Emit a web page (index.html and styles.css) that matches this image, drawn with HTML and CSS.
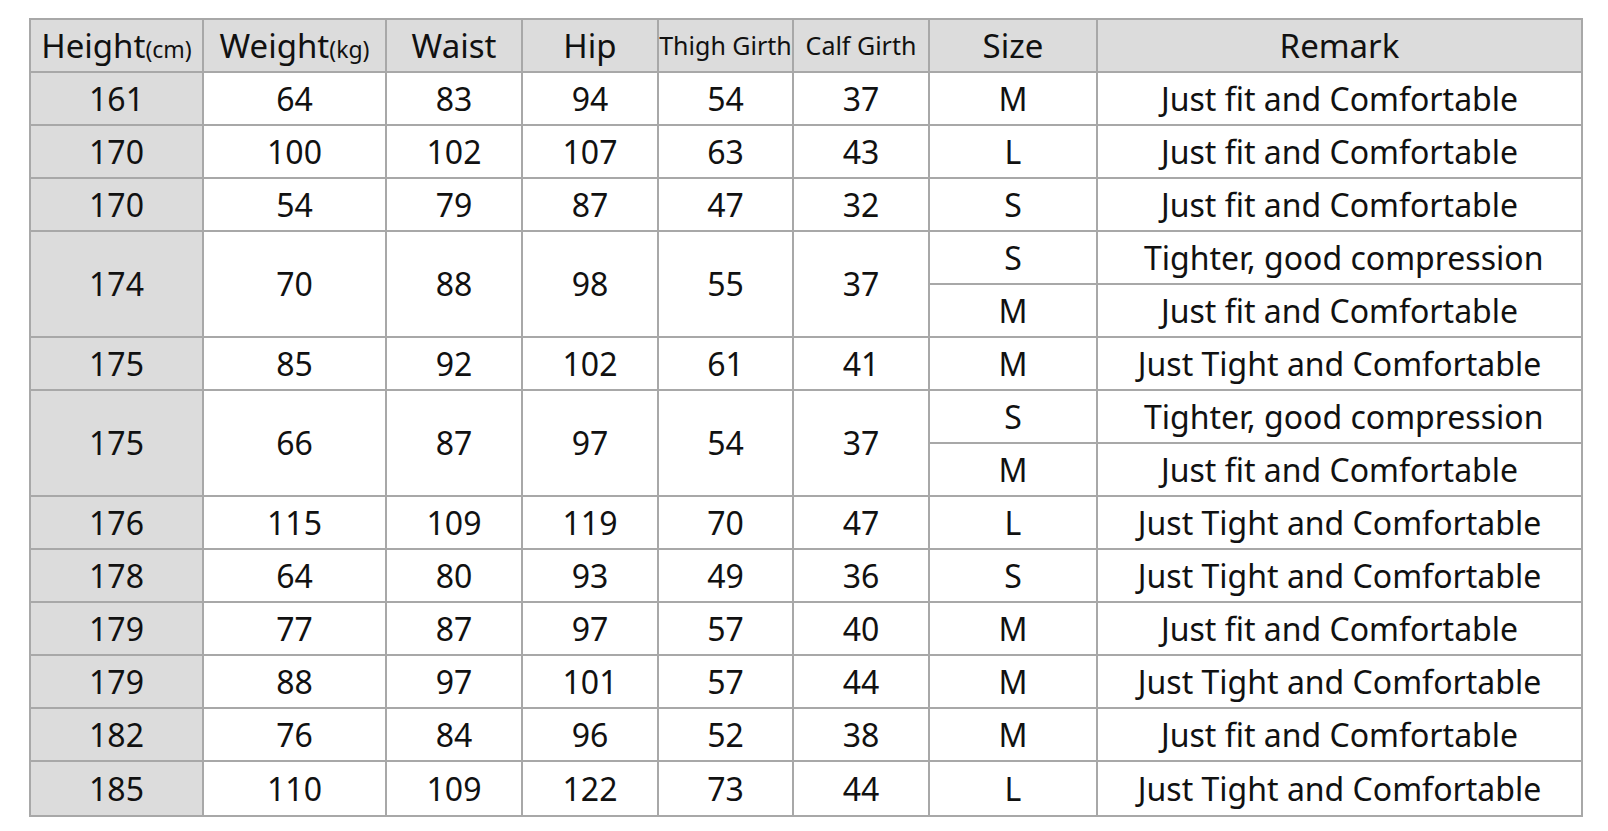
FILE: index.html
```html
<!DOCTYPE html>
<html>
<head>
<meta charset="utf-8">
<link rel="stylesheet" href="styles.css">
</head>
<body>
<div class="wrap">
<table class="size-table">
<colgroup>
<col class="c-height"><col class="c-weight"><col class="c-waist"><col class="c-hip"><col class="c-thigh"><col class="c-calf"><col class="c-size"><col class="c-remark">
</colgroup>
<thead>
<tr>
<th>Height<span class="unit">(cm)</span></th>
<th>Weight<span class="unit">(kg)</span></th>
<th>Waist</th>
<th>Hip</th>
<th class="small">Thigh Girth</th>
<th class="small">Calf Girth</th>
<th>Size</th>
<th>Remark</th>
</tr>
</thead>
<tbody>
<tr><td class="first">161</td><td>64</td><td>83</td><td>94</td><td>54</td><td>37</td><td>M</td><td>Just fit and Comfortable</td></tr>
<tr><td class="first">170</td><td>100</td><td>102</td><td>107</td><td>63</td><td>43</td><td>L</td><td>Just fit and Comfortable</td></tr>
<tr><td class="first">170</td><td>54</td><td>79</td><td>87</td><td>47</td><td>32</td><td>S</td><td>Just fit and Comfortable</td></tr>
<tr><td class="first" rowspan="2">174</td><td rowspan="2">70</td><td rowspan="2">88</td><td rowspan="2">98</td><td rowspan="2">55</td><td rowspan="2">37</td><td>S</td><td>&nbsp;Tighter, good compression</td></tr>
<tr><td>M</td><td>Just fit and Comfortable</td></tr>
<tr><td class="first">175</td><td>85</td><td>92</td><td>102</td><td>61</td><td>41</td><td>M</td><td>Just Tight and Comfortable</td></tr>
<tr><td class="first" rowspan="2">175</td><td rowspan="2">66</td><td rowspan="2">87</td><td rowspan="2">97</td><td rowspan="2">54</td><td rowspan="2">37</td><td>S</td><td>&nbsp;Tighter, good compression</td></tr>
<tr><td>M</td><td>Just fit and Comfortable</td></tr>
<tr><td class="first">176</td><td>115</td><td>109</td><td>119</td><td>70</td><td>47</td><td>L</td><td>Just Tight and Comfortable</td></tr>
<tr><td class="first">178</td><td>64</td><td>80</td><td>93</td><td>49</td><td>36</td><td>S</td><td>Just Tight and Comfortable</td></tr>
<tr><td class="first">179</td><td>77</td><td>87</td><td>97</td><td>57</td><td>40</td><td>M</td><td>Just fit and Comfortable</td></tr>
<tr><td class="first">179</td><td>88</td><td>97</td><td>101</td><td>57</td><td>44</td><td>M</td><td>Just Tight and Comfortable</td></tr>
<tr><td class="first">182</td><td>76</td><td>84</td><td>96</td><td>52</td><td>38</td><td>M</td><td>Just fit and Comfortable</td></tr>
<tr class="last"><td class="first">185</td><td>110</td><td>109</td><td>122</td><td>73</td><td>44</td><td>L</td><td>Just Tight and Comfortable</td></tr>
</tbody>
</table>
</div>
</body>
</html>
```

FILE: styles.css
```css
html, body {
  margin: 0;
  padding: 0;
  background: #ffffff;
}

.wrap {
  padding: 18px 0 0 29px;
}

.size-table {
  border-collapse: collapse;
  table-layout: fixed;
  width: 1552px;
  font-family: "Noto Sans", "Open Sans", sans-serif;
  font-size: 32px;
  color: #111111;
}

.c-height { width: 173px; }
.c-weight { width: 183px; }
.c-waist { width: 136px; }
.c-hip { width: 136px; }
.c-thigh { width: 135px; }
.c-calf { width: 136px; }
.c-size { width: 168px; }
.c-remark { width: 485px; }

.size-table tr {
  height: 53px;
}

.size-table tr.last {
  height: 55px;
}

.size-table th,
.size-table td {
  border: 2px solid #a8a8a8;
  padding: 0;
  text-align: center;
  vertical-align: middle;
  white-space: nowrap;
  font-weight: 400;
  line-height: 1;
}

.size-table th {
  background: #dcdcdc;
  font-size: 33px;
}

.size-table th.small {
  font-size: 25px;
}

.size-table .unit {
  font-size: 23px;
}

.size-table td.first {
  background: #dcdcdc;
}
```
